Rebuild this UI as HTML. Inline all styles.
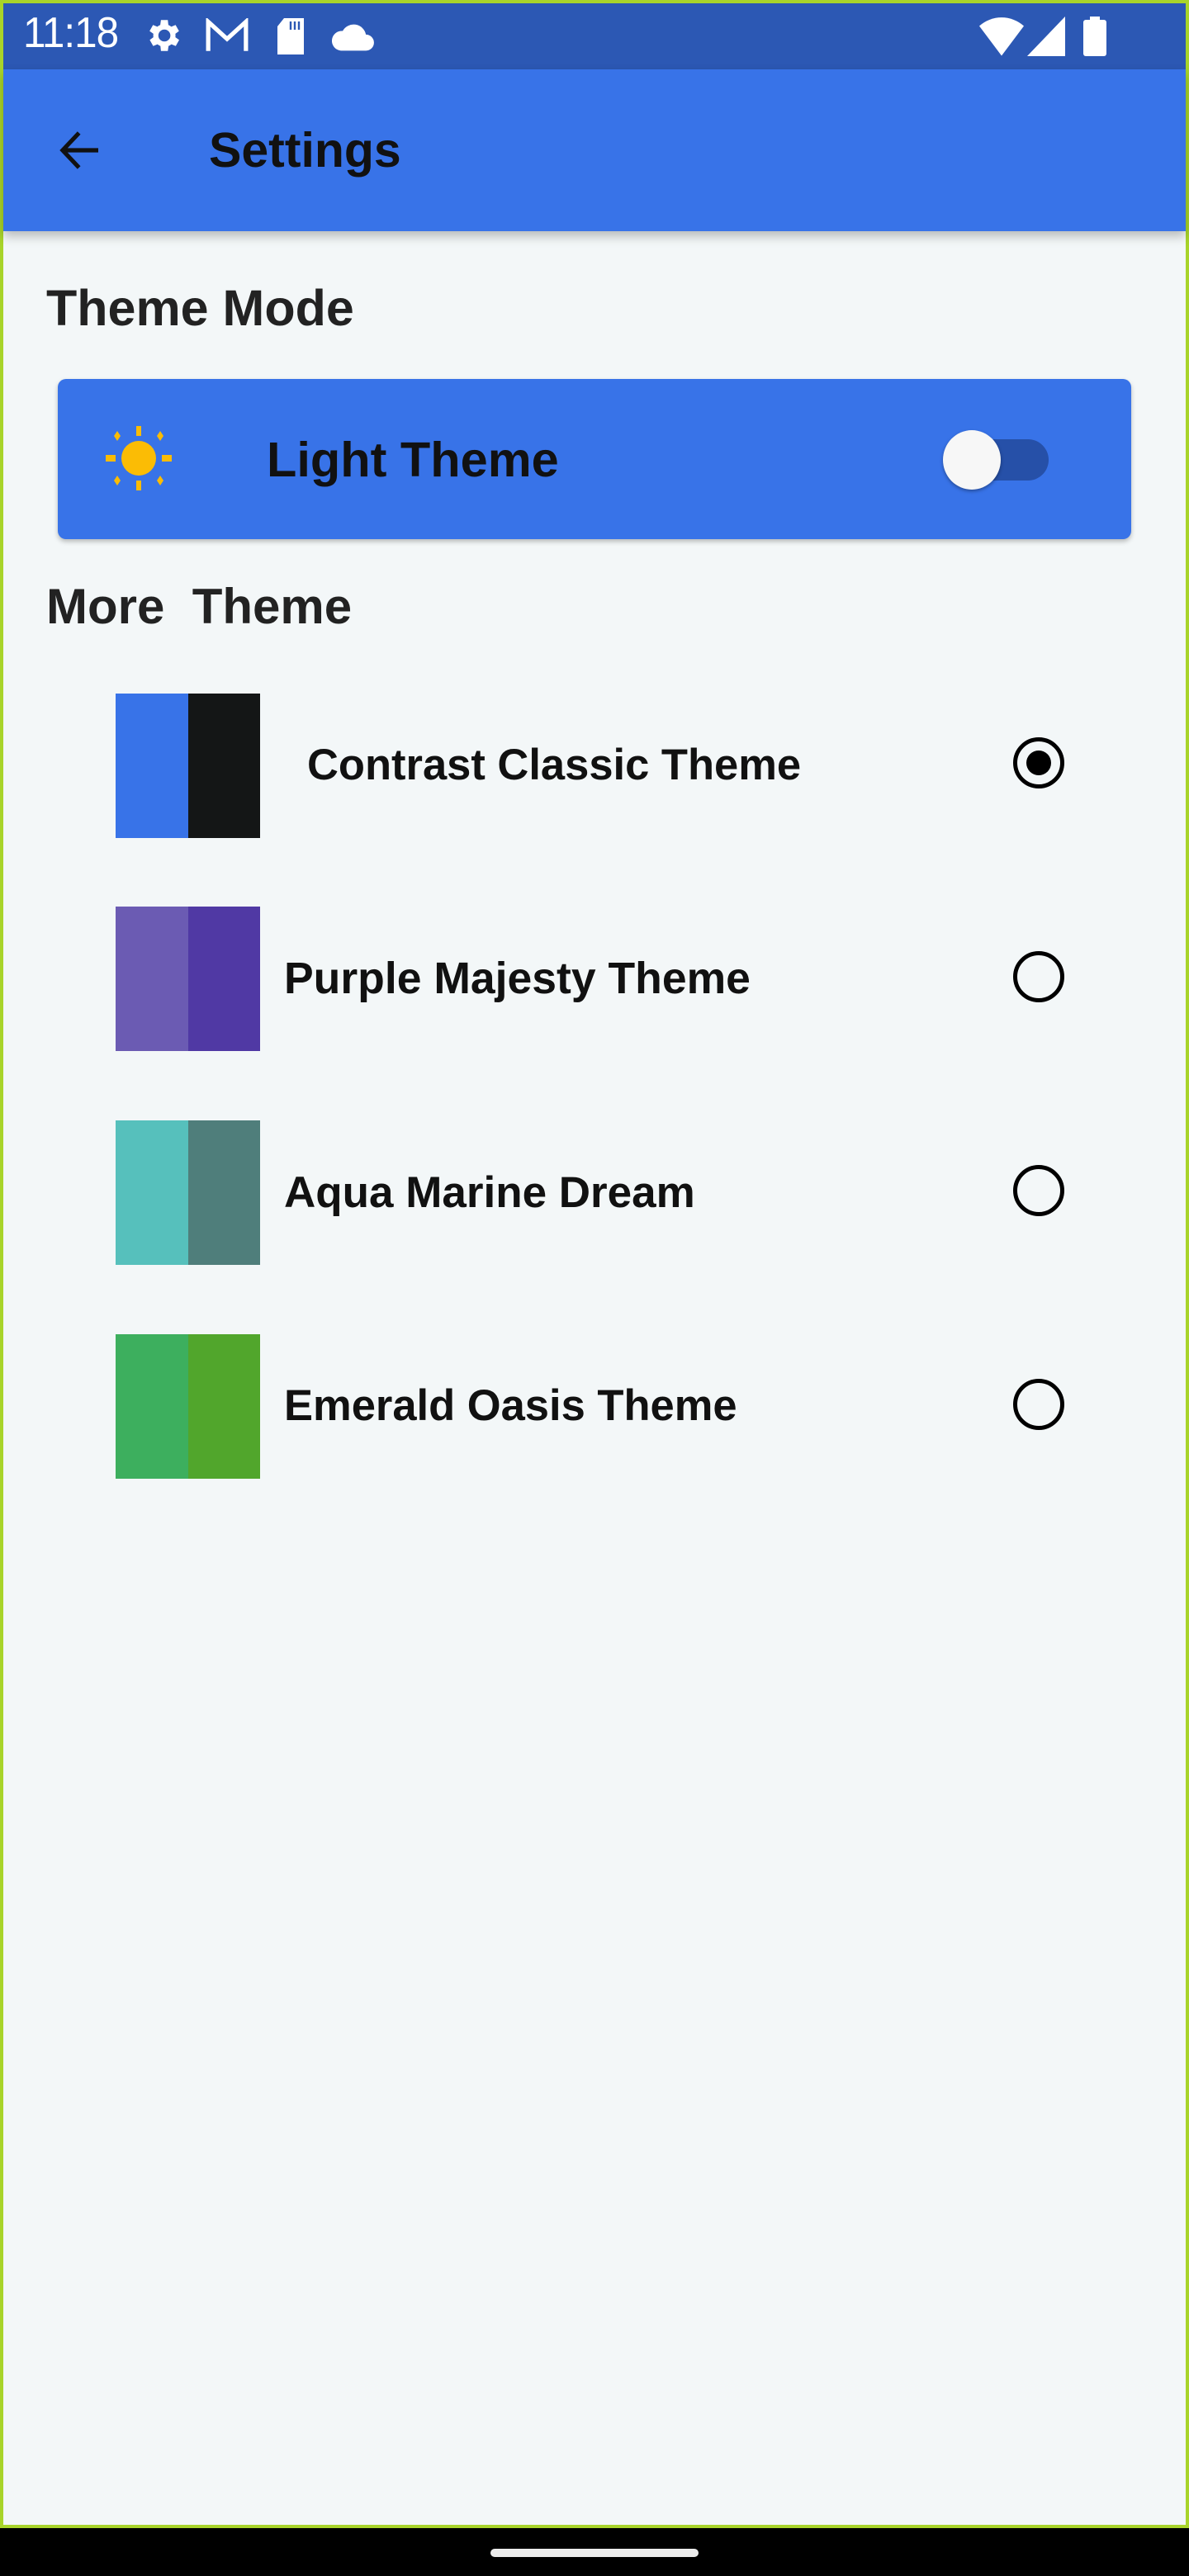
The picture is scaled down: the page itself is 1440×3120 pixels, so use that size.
<!DOCTYPE html>
<html><head><meta charset="utf-8"><style>
*{margin:0;padding:0;box-sizing:border-box}
body{width:1440px;height:3120px;background:#000;position:relative;overflow:hidden;font-family:"Liberation Sans",sans-serif;font-weight:bold;color:#111}
.frame{position:absolute;left:0;top:0;width:1440px;height:3062px;background:#f3f7f8;border:4px solid #a8d42a}
.status{position:absolute;left:4px;top:4px;width:1432px;height:80px;background:#2c58b4}
.appbar{position:absolute;left:4px;top:84px;width:1432px;height:196px;background:#3873e8;box-shadow:0 6px 12px rgba(0,0,0,.25)}
.t{position:absolute;white-space:nowrap}
.card{position:absolute;left:70px;top:459px;width:1300px;height:194px;background:#3873e8;border-radius:10px;box-shadow:0 3px 6px rgba(0,0,0,.25)}
.sw{position:absolute;left:140px;width:175px;height:175px;display:flex}
.sw div{flex:1}
.radio{position:absolute;left:1227px;width:62px;height:62px;border:5px solid #000;border-radius:50%}
</style></head><body>
<div class="frame"></div>
<div class="status"></div>
<div class="t" style="left:28px;top:10px;font-size:52px;font-weight:normal;color:#fff;letter-spacing:-1px;transform:scaleX(0.95);transform-origin:left">11:18</div>
<svg style="position:absolute;left:172px;top:18px" width="50" height="50" viewBox="0 0 24 24"><path fill="#fff" d="M19.4 13a7.5 7.5 0 000-2l2.1-1.6-2-3.5-2.5 1a7 7 0 00-1.7-1L15 3h-4l-.4 2.9a7 7 0 00-1.7 1l-2.5-1-2 3.5L6.6 11a7.5 7.5 0 000 2l-2.1 1.6 2 3.5 2.5-1a7 7 0 001.7 1L11 21h4l.4-2.9a7 7 0 001.7-1l2.5 1 2-3.5zM13 15.5a3.5 3.5 0 110-7 3.5 3.5 0 010 7z"/></svg>
<svg style="position:absolute;left:248px;top:22px" width="54" height="42" viewBox="0 0 26 20"><path fill="none" stroke="#fff" stroke-width="2.5" d="M2 19V2l11 10L24 2v17"/></svg>
<svg style="position:absolute;left:332px;top:20px" width="40" height="48" viewBox="0 0 20 24"><path fill="#fff" d="M6 1h12v22H2V6z"/><path stroke="#2c58b4" stroke-width="1.2" d="M10 3v5M12.5 3v5M15 3v5"/></svg>
<svg style="position:absolute;left:402px;top:26px" width="52" height="36" viewBox="0 0 24 16"><path fill="#fff" d="M19 7A7 7 0 006 5a5 5 0 00-1 11h14a4.5 4.5 0 000-9z"/></svg>
<svg style="position:absolute;left:1186px;top:20px" width="54" height="50" viewBox="0 0 24 22"><path fill="#fff" d="M12 21L0 5a18 18 0 0124 0z"/></svg>
<svg style="position:absolute;left:1244px;top:20px" width="46" height="48"><path fill="#fff" d="M46 0v48H0z"/></svg>
<svg style="position:absolute;left:1312px;top:20px" width="28" height="48"><rect x="8" y="0" width="12" height="6" fill="#fff"/><rect x="0" y="4" width="28" height="44" rx="3" fill="#fff"/></svg>
<div class="appbar"></div>
<svg style="position:absolute;left:68px;top:154px" width="60" height="56" viewBox="0 0 24 24"><path fill="none" stroke="#111" stroke-width="2.2" d="M21 12H3M11 3l-8.5 9 8.5 9"/></svg>
<div class="t" style="left:253px;top:150px;font-size:59px;line-height:64px">Settings</div>
<div class="t" style="left:56px;top:340px;font-size:61px;line-height:66px;color:#222">Theme Mode</div>
<div class="card"></div>
<svg style="position:absolute;left:128px;top:516px" width="80" height="78" viewBox="-40 -39 80 78"><ellipse cx="0" cy="0" rx="21" ry="21" fill="#fbbc05"/><g fill="#fbbc05"><rect x="-3" y="-39" width="6" height="12"/><rect x="-3" y="27" width="6" height="12"/><rect x="-40" y="-4" width="12" height="8"/><rect x="28" y="-4" width="12" height="8"/><path d="M-26-33l4 6-4 6-4-6zM26-33l4 6-4 6-4-6zM-26 21l4 6-4 6-4-6zM26 21l4 6-4 6-4-6z"/></g></svg>
<div class="t" style="left:323px;top:524px;font-size:59.5px;line-height:66px">Light Theme</div>
<div style="position:absolute;left:1170px;top:532px;width:100px;height:50px;border-radius:25px;background:#2650a8"></div>
<div style="position:absolute;left:1142px;top:521px;width:70px;height:72px;border-radius:50%;background:#f7f7f7;box-shadow:0 2px 4px rgba(0,0,0,.35)"></div>
<div class="t" style="left:56px;top:702px;font-size:60px;line-height:66px;color:#222;white-space:pre">More  Theme</div>

<div class="sw" style="top:840px"><div style="background:#3873e8"></div><div style="background:#141616"></div></div>
<div class="t" style="left:372px;top:896px;font-size:52.5px;line-height:62px">Contrast Classic Theme</div>
<div class="radio" style="top:893px"><div style="position:absolute;left:11px;top:11px;width:30px;height:30px;border-radius:50%;background:#000"></div></div>

<div class="sw" style="top:1098px"><div style="background:#6b5bb3"></div><div style="background:#5039a4"></div></div>
<div class="t" style="left:344px;top:1155px;font-size:53.5px;line-height:62px">Purple Majesty Theme</div>
<div class="radio" style="top:1152px"></div>

<div class="sw" style="top:1357px"><div style="background:#56c0bc"></div><div style="background:#4f7e7b"></div></div>
<div class="t" style="left:344px;top:1414px;font-size:53px;line-height:62px">Aqua Marine Dream</div>
<div class="radio" style="top:1411px"></div>

<div class="sw" style="top:1616px"><div style="background:#3daf5e"></div><div style="background:#51a62c"></div></div>
<div class="t" style="left:344px;top:1672px;font-size:52.5px;line-height:62px">Emerald Oasis Theme</div>
<div class="radio" style="top:1670px"></div>

<div style="position:absolute;left:594px;top:3087px;width:252px;height:10px;border-radius:5px;background:#ececec"></div>
</body></html>
